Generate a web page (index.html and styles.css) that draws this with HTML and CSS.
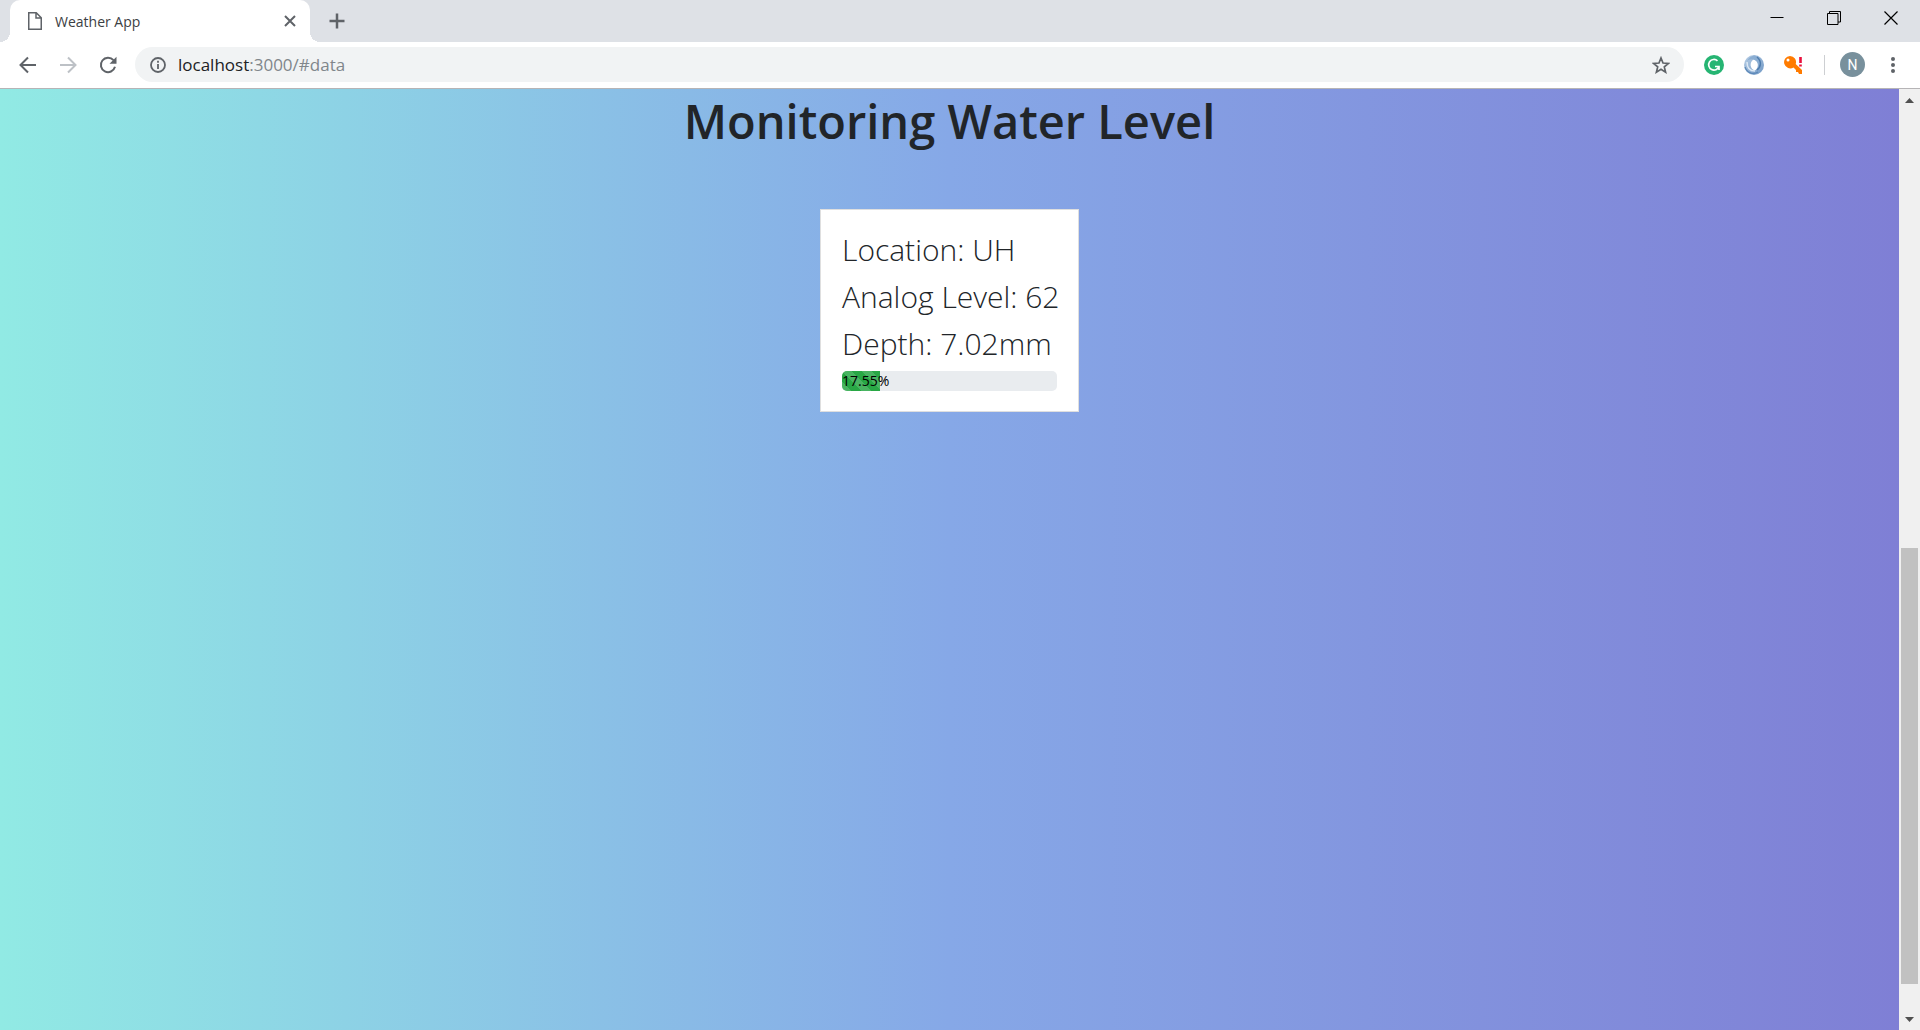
FILE: index.html
```html
<!DOCTYPE html>
<html lang="en">
<head>
<meta charset="utf-8">
<title>Weather App</title>
<link rel="stylesheet" href="styles.css">
</head>
<body>
<header>
  <div class="tab-strip">
    <div class="tab">
      <svg class="tab-icon" width="14" height="18" viewBox="0 0 14 18" fill="none" stroke="#5f6368" stroke-width="1.5"><path d="M.75.75h7.5l5 5v11.5H.75zM8 1v5h5"/></svg>
      <span class="tab-title">Weather App</span>
      <button class="icon-button close-tab" aria-label="Close tab"><svg width="12" height="12" viewBox="0 0 12 12" stroke="#5f6368" stroke-width="2"><path d="M1 1l10 10M11 1L1 11"/></svg></button>
    </div>
    <button class="icon-button new-tab" aria-label="New tab"><svg width="16" height="16" viewBox="0 0 16 16" stroke="#5f6368" stroke-width="2.500"><path d="M8 .5v15M.5 8h15"/></svg></button>
    <div class="window-controls">
      <button class="icon-button" aria-label="Minimize"><svg width="14" height="14" viewBox="0 0 14 14" stroke="#000"><path d="M.5 6.500h13"/></svg></button>
      <button class="icon-button" aria-label="Restore"><svg width="14" height="14" viewBox="0 0 14 14" fill="none" stroke="#000"><path d="M.5 2.500h10.500v11H.5zM2.500 2.500v-2h11v10.500H11"/></svg></button>
      <button class="icon-button" aria-label="Close window"><svg width="14" height="14" viewBox="0 0 14 14" stroke="#000" stroke-width="1.200"><path d="M.5.5l13 13M13.500.5l-13 13"/></svg></button>
    </div>
  </div>
  <div class="toolbar">
    <nav class="history">
      <button class="icon-button" aria-label="Back"><svg width="18" height="18" viewBox="0 0 18 18" fill="none" stroke="#5f6368" stroke-width="2"><path d="M17 9H2M9 1.500L1.500 9 9 16.500"/></svg></button>
      <button class="icon-button" aria-label="Forward"><svg width="18" height="18" viewBox="0 0 18 18" fill="none" stroke="#bdc1c6" stroke-width="2"><path d="M1 9h15M9 1.500L16.500 9 9 16.500"/></svg></button>
      <button class="icon-button" aria-label="Reload"><svg width="18" height="18" viewBox="0 0 18 18"><path d="M14.500 4.200A7.200 7.200 0 1 0 16 10.800" fill="none" stroke="#5f6368" stroke-width="2"/><path d="M17.500.8v7H10.500z" fill="#5f6368"/></svg></button>
    </nav>
    <div class="address">
      <svg width="16" height="16" viewBox="0 0 16 16" fill="none" stroke="#5f6368" stroke-width="1.800"><circle cx="8" cy="8" r="7"/><path d="M8 7v5M8 3.800v2"/></svg>
      <a class="url" href="#data">localhost<span>:3000/#data</span></a>
      <button class="icon-button" aria-label="Bookmark this page"><svg width="18" height="18" viewBox="0 0 18 18" fill="none" stroke="#5f6368" stroke-width="1.700"><path d="M9 2l2 5 5.400.4-4.100 3.500 1.300 5.300L9 13.300l-4.600 2.900 1.300-5.300-4.100-3.500L7 7z"/></svg></button>
    </div>
    <div class="extensions">
      <button class="icon-button" aria-label="Writing assistant"><svg width="20" height="20" viewBox="0 0 20 20"><circle cx="10" cy="10" r="10" fill="#26b573"/><path d="M13.500 5.800A5.300 5.300 0 1 0 15 11.500M11 11.500h4v3.500" fill="none" stroke="#fff" stroke-width="1.700"/></svg></button>
      <button class="icon-button" aria-label="Formatter"><svg width="20" height="20" viewBox="0 0 20 20"><defs><linearGradient id="ring" x1="0" y1="0" x2="1" y2="1"><stop offset="0" stop-color="#b9cfe6"/><stop offset="1" stop-color="#6f97c4"/></linearGradient></defs><path fill="url(#ring)" fill-rule="evenodd" d="M10 0a10 10 0 1 0 0 20 10 10 0 0 0 0-20zM9.500 4.500c5 1 6 8 1.500 11-5-1-6-8-1.500-11z"/><path d="M10.500.5c7 1 9.500 9 3.500 14 1-4 1-8-4.500-10C6 4 4 5 3 6.500 4 3 7 1 10.500.5z" fill="#8baed3"/><path d="M13 2c5 4 4 10 0 13" fill="none" stroke="#4f7cad" stroke-width="1.500"/><path d="M1 12c2 6 8 8 13 5" fill="none" stroke="#5c88b8" stroke-width="1.200"/><path d="M3 7c0 6 3 9 8 9" fill="none" stroke="#dce8f4" stroke-width="1.500"/></svg></button>
      <button class="icon-button" aria-label="Password manager"><svg width="20" height="20" viewBox="0 0 20 20"><path fill="#ff7b00" fill-rule="evenodd" d="M6 1a6 6 0 0 1 5.700 8l6.300 6v4h-3l-1-2h-2v-2l-2.500-2.500A6.200 6.200 0 1 1 6 1zM4 3.500a1.500 1.500 0 1 0 0 3 1.500 1.500 0 0 0 0-3z"/><path d="M16.500 2v6M16.500 9.500v2" stroke="#e9103c" stroke-width="2.600"/></svg></button>
    </div>
    <button class="avatar" aria-label="Profile">N</button>
    <button class="icon-button menu" aria-label="Menu"><svg width="4" height="16" viewBox="0 0 4 16" fill="#5f6368"><circle cx="2" cy="2" r="2"/><circle cx="2" cy="8" r="2"/><circle cx="2" cy="14" r="2"/></svg></button>
  </div>
</header>
<div class="viewport">
  <main id="data">
    <h1>Monitoring Water Level</h1>
    <section class="card">
      <p>Location: UH</p>
      <p>Analog Level: 62</p>
      <p>Depth: 7.02mm</p>
      <div class="progress" role="progressbar" aria-label="Water level" aria-valuenow="17.55" aria-valuemin="0" aria-valuemax="100">
        <div class="progress-fill" style="width: 17.55%">17.55%</div>
      </div>
    </section>
  </main>
  <div class="scrollbar">
    <button class="icon-button" aria-label="Scroll up"><svg width="9" height="5" viewBox="0 0 9 5" fill="#505050"><path d="M4.500 0L9 5H0z"/></svg></button>
    <div class="track"><div class="thumb"></div></div>
    <button class="icon-button" aria-label="Scroll down"><svg width="9" height="5" viewBox="0 0 9 5" fill="#505050"><path d="M4.500 5L9 0H0z"/></svg></button>
  </div>
</div>
</body>
</html>
```
FILE: styles.css
```css
* { box-sizing: border-box; }

body {
  display: flex;
  flex-direction: column;
  min-height: 100vh;
  margin: 0;
  color: #212529;
  font-family: "Open Sans", "Noto Sans", sans-serif;
}

button { font: inherit; }

svg { display: block; }

.icon-button {
  display: flex;
  align-items: center;
  justify-content: center;
  padding: 0;
  border: 0;
  background: none;
}

/* Tab strip */
.tab-strip {
  display: flex;
  height: 42px;
  padding-left: 10px;
  background: #dee1e6;
}

.tab {
  position: relative;
  display: flex;
  align-items: center;
  width: 300px;
  padding: 0 14px 0 18px;
  border-radius: 10px 10px 0 0;
  background: #fff;
}

.tab::before,
.tab::after {
  position: absolute;
  bottom: 0;
  width: 10px;
  height: 10px;
  content: "";
}

.tab::before {
  left: -10px;
  background: radial-gradient(circle at 0 0, #dee1e6 10px, #fff 10px);
}

.tab::after {
  right: -10px;
  background: radial-gradient(circle at 100% 0, #dee1e6 10px, #fff 10px);
}

.tab-title {
  flex: 1;
  padding-left: 13px;
  color: #3c4043;
  font-size: 14px;
}

.new-tab { width: 54px; }

.window-controls {
  display: flex;
  height: 36px;
  margin-right: 1px;
  margin-left: auto;
}

.window-controls .icon-button { width: 57px; }

/* Toolbar */
.toolbar {
  display: flex;
  align-items: center;
  height: 47px;
  padding: 0 17px 1px 19px;
  border-bottom: 1px solid #b6b4b6;
  background: #fff;
}

.history {
  display: flex;
  gap: 22px;
  margin-right: 18px;
}

.address {
  display: flex;
  flex: 1;
  align-items: center;
  height: 35px;
  padding: 0 14px 0 15px;
  border-radius: 18px;
  background: #f1f3f4;
}

.url {
  flex: 1;
  padding-left: 12px;
  color: #202124;
  font-size: 17px;
  line-height: 24px;
  text-decoration: none;
}

.url span { color: #80868b; }

.extensions {
  display: flex;
  gap: 20px;
  margin-right: 15px;
  padding: 0 20px;
  border-right: 1px solid #cdcfd2;
}

.avatar {
  width: 25px;
  height: 25px;
  padding: 0;
  border: 0;
  border-radius: 50%;
  background: #78909c;
  color: #fff;
  font-family: Roboto, sans-serif;
  font-size: 14px;
}

.menu {
  width: 20px;
  margin-left: 18px;
}

/* Page */
.viewport {
  display: flex;
  flex: 1;
}

main {
  display: flex;
  flex: 1;
  flex-direction: column;
  align-items: center;
  padding-top: 2px;
  background: linear-gradient(to left, #7f7fd5, #86a8e7, #91eae4);
}

h1 {
  margin: 0 0 58px;
  font-size: 47px;
  font-weight: 600;
  line-height: 60px;
}

.card {
  width: 259px;
  padding: 16px 21px 20px;
  border: 1px solid #dfdfdf;
  background: #fff;
}

.card p {
  margin: 0;
  font-size: 30px;
  font-weight: 300;
  line-height: 47px;
  white-space: nowrap;
}

.progress {
  height: 20px;
  margin-top: 4px;
  overflow: hidden;
  border-radius: 5px;
  background: #e9ecef;
}

.progress-fill {
  height: 100%;
  background: #28a745 linear-gradient(45deg, rgba(255, 255, 255, .15) 25%, transparent 25% 50%, rgba(255, 255, 255, .15) 50% 75%, transparent 75%) 0 0 / 20px 20px;
  color: #000;
  font-size: 14px;
  line-height: 20px;
  white-space: nowrap;
}

.scrollbar {
  display: flex;
  flex-direction: column;
  width: 21px;
  background: #f0f0f0;
}

.scrollbar .icon-button { height: 22px; }

.track {
  display: flex;
  flex: 1;
  flex-direction: column;
  justify-content: flex-end;
  padding: 0 2px 24px;
}

.thumb {
  height: 50%;
  background: #c1c1c1;
}
```
